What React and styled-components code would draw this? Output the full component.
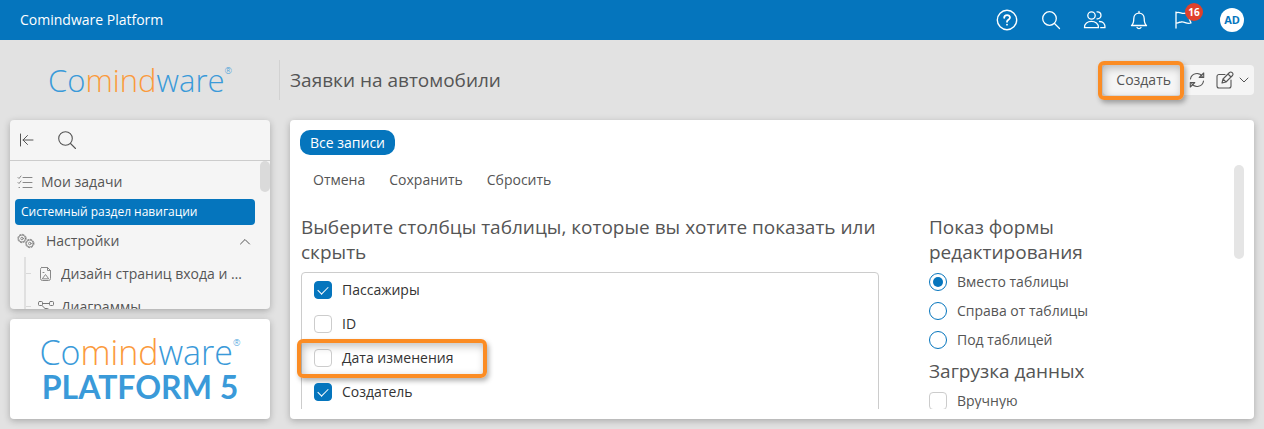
import React from "react";
import styled, { createGlobalStyle } from "styled-components";

const blue = "#0575bd";
const logoBlue = "#3a9ad9";
const logoOrange = "#fb9a3c";

const GlobalStyle = createGlobalStyle`
  * { box-sizing: border-box; }
  body {
    margin: 0;
    background: #e2e2e2;
    color: #555;
    font: 14px/20px "Open Sans", "Noto Sans", sans-serif;
  }
  button, input { font: inherit; color: inherit; margin: 0; }
  button { border: 0; padding: 0; background: none; cursor: pointer; }
  h1, h2, p, ul, fieldset { margin: 0; padding: 0; border: 0; font-weight: 400; }
  ul { list-style: none; }
  a { color: inherit; text-decoration: none; }
  svg { display: block; fill: none; stroke: currentColor; flex: none; }
`;

const Page = styled.div`
  display: flex;
  flex-direction: column;
  height: 100vh;
  min-height: 400px;
`;

const TopBar = styled.header`
  display: flex;
  align-items: center;
  justify-content: space-between;
  height: 40px;
  flex: none;
  padding: 0 20px;
  background: ${blue};
  color: #fff;
`;

const TopActions = styled.nav`
  display: flex;
  align-items: center;
  gap: 20px;
`;

const TopButton = styled.button`
  position: relative;
  display: grid;
  place-items: center;
  width: 24px;
  height: 24px;
`;

const Badge = styled.span`
  position: absolute;
  top: -5px;
  right: -8px;
  min-width: 18px;
  height: 18px;
  border-radius: 9px;
  background: #e0412b;
  font-size: 10px;
  line-height: 18px;
  font-weight: 700;
  text-align: center;
`;

const Avatar = styled.button`
  width: 24px;
  height: 24px;
  margin-left: 5px;
  border-radius: 50%;
  background: #fff;
  color: ${blue};
  font-size: 11px;
  line-height: 24px;
  font-weight: 700;
`;

const Heading = styled.div`
  display: flex;
  align-items: center;
  height: 80px;
  flex: none;
  padding: 0 10px;
`;

const Brand = styled.a`
  display: flex;
  justify-content: center;
  width: 260px;
  flex: none;
`;

const Wordmark = styled.span`
  display: flex;
  align-items: flex-start;
  color: ${logoBlue};
  font-size: ${(p) => p.$size}px;
  line-height: 36px;
  font-weight: 350;
`;

const WordAccent = styled.span`
  color: ${logoOrange};
`;

const Mark = styled.span`
  font-size: 9px;
  line-height: 18px;
`;

const Title = styled.h1`
  display: flex;
  align-items: center;
  flex: 1;
  height: 40px;
  margin-left: 9px;
  padding-left: 10px;
  border-left: 1px solid #d2d2d2;
  font-size: 19px;
  line-height: 25px;
`;

const Tools = styled.div`
  display: flex;
  align-items: center;
  height: 30px;
  border-radius: 4px;
  background: #f5f5f5;
`;

const CreateButton = styled.button`
  position: relative;
  height: 30px;
  padding: 0 13px;
`;

const ToolButton = styled.button`
  display: flex;
  align-items: center;
  gap: 4px;
  height: 30px;
  padding: 0 5px;
`;

const Highlight = styled.span`
  position: absolute;
  inset: ${(p) => p.$inset};
  border: 4px solid #fb8c24;
  border-radius: 6px;
  box-shadow: 2px 3px 5px rgba(0, 0, 0, 0.3), inset 2px 3px 8px rgba(0, 0, 0, 0.25);
  pointer-events: none;
`;

const Body = styled.div`
  display: grid;
  grid-template-columns: 260px minmax(0, 1fr);
  gap: 20px;
  flex: 1;
  min-height: 0;
  padding: 0 10px 10px;
`;

const Side = styled.aside`
  display: flex;
  flex-direction: column;
  gap: 10px;
  min-height: 0;
`;

const Card = styled.section`
  display: flex;
  flex-direction: column;
  min-height: 0;
  border-radius: 4px;
  background: #fff;
  box-shadow: 0 2px 7px rgba(0, 0, 0, 0.25);
  overflow: hidden;
`;

const NavCard = styled(Card)`
  flex: 1;
  background: #f5f5f5;
`;

const NavTools = styled.div`
  display: flex;
  align-items: center;
  gap: 21px;
  height: 41px;
  flex: none;
  padding: 0 8px;
  border-bottom: 1px solid #ccc;
`;

const NavScroll = styled.div`
  display: flex;
  align-items: flex-start;
  flex: 1;
  min-height: 0;
  overflow: hidden;
`;

const ScrollThumb = styled.div`
  width: 10px;
  height: ${(p) => p.$length}px;
  flex: none;
  border-radius: 5px;
  background: ${(p) => p.$tone};
`;

const NavList = styled.ul`
  flex: 1;
  min-width: 0;
  padding: 4px 5px 0;
`;

const NavLink = styled.a`
  display: flex;
  align-items: center;
  gap: ${(p) => p.$gap}px;
  height: ${(p) => p.$height}px;
  padding: 0 4px 0 2px;
`;

const NavText = styled.span`
  flex: 1;
  min-width: 0;
  overflow: hidden;
  white-space: nowrap;
  text-overflow: ellipsis;
`;

const NavSection = styled.p`
  padding: 0 6px;
  border-radius: 4px;
  background: ${blue};
  color: #fff;
  font-size: 12px;
  line-height: 26px;
`;

const SubList = styled.ul`
  margin-left: 9px;
  border-left: 2px solid #e0e0e0;
`;

const SubItem = styled.li`
  display: flex;
  align-items: center;
  &::before {
    content: "";
    width: 5px;
    height: 1px;
    background: #d8d8d8;
  }
`;

const SubLink = styled.a`
  display: flex;
  align-items: center;
  flex: 1;
  min-width: 0;
  gap: 7px;
  height: 33px;
  padding: 0 12px 0 7px;
`;

const LogoCard = styled(Card)`
  align-items: center;
  justify-content: center;
  height: 100px;
  flex: none;
`;

const Product = styled.span`
  color: ${logoBlue};
  font-family: Lato, "Open Sans", sans-serif;
  font-size: 32px;
  line-height: 34px;
  font-weight: 700;
`;

const Main = styled(Card)`
  padding: 10px 0;
  gap: 10px;
`;

const Views = styled.div`
  display: flex;
  flex: none;
  padding: 0 10px;
`;

const ViewPill = styled.button`
  height: 25px;
  padding: 0 10px;
  border-radius: 10px;
  background: ${blue};
  color: #fff;
`;

const Scroller = styled.div`
  display: flex;
  align-items: flex-start;
  flex: 1;
  min-height: 0;
  padding: 0 10px 0 11px;
  overflow: hidden;
`;

const Settings = styled.form`
  display: flex;
  flex-direction: column;
  gap: 20px;
  flex: 1;
  padding-right: 35px;
`;

const Commands = styled.div`
  display: flex;
  height: 30px;
`;

const Command = styled.button`
  padding: 0 12px;
`;

const Columns = styled.div`
  display: grid;
  grid-template-columns: minmax(0, 578fr) minmax(0, 270fr);
  align-items: start;
  gap: 50px;
`;

const SectionTitle = styled.h2`
  margin-bottom: ${(p) => p.$after}px;
  font-size: 19px;
  line-height: 25px;
`;

const FieldList = styled.ul`
  padding-bottom: 20px;
  border: 1px solid #ccc;
  border-radius: 4px;
`;

const Field = styled.li`
  position: relative;
  padding-left: 12px;
`;

const Options = styled.fieldset`
  margin-bottom: 5px;
`;

const Choice = styled.label`
  display: flex;
  align-items: center;
  gap: 10px;
  height: ${(p) => p.$height}px;
  color: ${(p) => p.$color || "inherit"};
`;

const Check = styled.input.attrs({ type: "checkbox" })`
  appearance: none;
  display: grid;
  place-items: center;
  width: 18px;
  height: 18px;
  border: 1px solid #ccc;
  border-radius: 4px;
  background: #fff;
  &:checked {
    border-color: ${blue};
    background: ${blue};
  }
  &:checked::after {
    content: "";
    width: 9px;
    height: 5px;
    margin-bottom: 3px;
    border: solid #fff;
    border-width: 0 0 1px 1px;
    transform: rotate(-45deg);
  }
`;

const Radio = styled.input.attrs({ type: "radio" })`
  appearance: none;
  width: 18px;
  height: 18px;
  border: 1px solid ${blue};
  border-radius: 50%;
  background: #fff;
  &:checked {
    padding: 3px;
    background: ${blue} content-box;
  }
`;

const Icon = ({ w = 24, h = 24, sw = 1.3, color, children }) => (
  <svg
    width={w}
    height={h}
    viewBox={`0 0 ${w} ${h}`}
    strokeWidth={sw}
    strokeLinecap="round"
    strokeLinejoin="round"
    color={color}
    aria-hidden="true"
  >
    {children}
  </svg>
);

const Search = ({ sw }) => (
  <Icon sw={sw}>
    <circle cx="10.5" cy="10.5" r="6.8" />
    <path d="M15.5 15.5l5 5" />
  </Icon>
);

const Logo = ({ size }) => (
  <Wordmark $size={size}>
    <span>
      Co<WordAccent>mind</WordAccent>ware
    </span>
    <Mark>®</Mark>
  </Wordmark>
);

const fields = [
  { name: "Пассажиры", checked: true },
  { name: "ID" },
  { name: "Дата изменения", highlighted: true },
  { name: "Создатель", checked: true },
];

const modes = ["Вместо таблицы", "Справа от таблицы", "Под таблицей"];

export default function App() {
  return (
    <Page>
      <GlobalStyle />
      <TopBar>
        <a href="#home">Comindware Platform</a>
        <TopActions>
          <TopButton aria-label="Справка">
            <Icon sw={1.4}>
              <circle cx="12" cy="12" r="9.7" />
              <path strokeWidth="1.8" d="M9.2 9.8c0-3.7 5.8-3.6 5.8-.2 0 2.3-3 2.2-3 4.2M12 16.600v.1" />
            </Icon>
          </TopButton>
          <TopButton aria-label="Поиск">
            <Search />
          </TopButton>
          <TopButton aria-label="Пользователи">
            <Icon>
              <circle cx="8.5" cy="7.500" r="3.700" />
              <path d="M1.500 19.700c-.7-8.500 14.500-8.500 14 0zM14 3.800c5.300-.5 5.300 7.600 0 7M17.700 19.700H22c.3-4-2-6.200-5.500-6.200" />
            </Icon>
          </TopButton>
          <TopButton aria-label="Уведомления">
            <Icon>
              <path d="M4.500 17.500c2-1.600 2.300-3.500 2.300-7 0-7.300 10.400-7.300 10.400 0 0 3.500.3 5.400 2.300 7zM10 19.500c.8 1.500 3.200 1.500 4 0M12 5V3.500" />
            </Icon>
          </TopButton>
          <TopButton aria-label="Задачи">
            <Icon>
              <path d="M5 20V4M5 4.800c3-1.500 5 .8 8 .6l6-.8-1.500 4.500L20 15c-5 1.500-6-1.800-10-1-2 .2-3.500 1-5 1.300" />
            </Icon>
            <Badge>16</Badge>
          </TopButton>
          <Avatar>AD</Avatar>
        </TopActions>
      </TopBar>

      <Heading>
        <Brand href="#home">
          <Logo size={31} />
        </Brand>
        <Title>Заявки на автомобили</Title>
        <Tools>
          <CreateButton>
            Создать
            <Highlight $inset="-4px 0 -5px -5px" />
          </CreateButton>
          <ToolButton aria-label="Обновить">
            <Icon w={16} h={16} sw={1.1}>
              <path d="M1.500 7C2.300 1.200 10-.5 13.300 4.500M14.500 9C13.700 14.800 6 16.500 2.700 11.500M14.700 1v4.500h-4.500zM1.300 15v-4.500h4.500z" />
            </Icon>
          </ToolButton>
          <ToolButton aria-label="Изменить">
            <Icon w={20} h={18} sw={1.1}>
              <path d="M10 3.500H4a2 2 0 0 0-2 2v9.500a2 2 0 0 0 2 2h10a2 2 0 0 0 2-2V9M7 12l1-4 6.500-6.500c1.700-1.500 4.500 1 3 3L11 11zM13 3l3 3M8 8l3 3" />
            </Icon>
            <Icon w={10} h={8} sw={1}>
              <path d="M1 2l4 4 4-4" />
            </Icon>
          </ToolButton>
        </Tools>
      </Heading>

      <Body>
        <Side>
          <NavCard as="nav">
            <NavTools>
              <button aria-label="Свернуть">
                <Icon w={16} h={14} sw={1}>
                  <path d="M2.500 1v12M15 7H5M9.500 2.500L5 7l4.500 4.500" />
                </Icon>
              </button>
              <button aria-label="Поиск">
                <Search sw={1.1} />
              </button>
            </NavTools>
            <NavScroll>
              <NavList>
                <li>
                  <NavLink href="#tasks" $gap={8} $height={34}>
                    <Icon w={16} h={14} sw={1} color="#888">
                      <path d="M6 2.500h9M6 7.500h9M6 12.500h9M1 2.500l1 1 2-2.500M1 7.500l1 1 2-2.500M2 12.500h.5" />
                    </Icon>
                    <NavText>Мои задачи</NavText>
                  </NavLink>
                </li>
                <li>
                  <NavSection>Системный раздел навигации</NavSection>
                </li>
                <li>
                  <NavLink href="#settings" $gap={11} $height={32}>
                    <Icon w={18} h={16} sw={0.8} color="#777">
                      <circle cx="5" cy="5.500" r="1.300" />
                      <circle cx="5" cy="5.500" r="3.500" />
                      <circle cx="5" cy="5.500" r="4.200" strokeDasharray="1.600 1.700" />
                      <circle cx="12.800" cy="10.500" r="1.300" />
                      <circle cx="12.800" cy="10.500" r="3.500" />
                      <circle cx="12.800" cy="10.500" r="4.200" strokeDasharray="1.600 1.700" />
                    </Icon>
                    <NavText>Настройки</NavText>
                    <Icon w={12} h={8} sw={1}>
                      <path d="M1.500 7L6 2.500 10.500 7" />
                    </Icon>
                  </NavLink>
                  <SubList>
                    <SubItem>
                      <SubLink href="#design">
                        <Icon w={16} h={16} sw={1} color="#888">
                          <path d="M3.500 1.500h6l3 3v8a2 2 0 0 1-2 2h-6a2 2 0 0 1-2-2v-9a2 2 0 0 1 1-2zM9.500 1.500v3h3M4.500 12.500l3-4 3 4zM5 6.500h1" />
                        </Icon>
                        <NavText>Дизайн страниц входа и регистрации</NavText>
                      </SubLink>
                    </SubItem>
                    <SubItem>
                      <SubLink href="#diagrams">
                        <Icon w={16} h={16} sw={1} color="#777">
                          <rect x="0.500" y="2.500" width="4" height="4" rx="1" />
                          <rect x="11.500" y="2.500" width="4" height="4" rx="1" />
                          <rect x="6.500" y="9.500" width="4" height="4" rx="1" />
                          <path d="M4.500 4.500h7M4 6.500l3 3" />
                        </Icon>
                        <NavText>Диаграммы</NavText>
                      </SubLink>
                    </SubItem>
                  </SubList>
                </li>
              </NavList>
              <ScrollThumb $length={31} $tone="#dadada" />
            </NavScroll>
          </NavCard>
          <LogoCard>
            <Logo size={34} />
            <Product>PLATFORM 5</Product>
          </LogoCard>
        </Side>

        <Main as="main">
          <Views>
            <ViewPill>Все записи</ViewPill>
          </Views>
          <Scroller>
            <Settings>
              <Commands>
                <Command type="button">Отмена</Command>
                <Command type="button">Сохранить</Command>
                <Command type="button">Сбросить</Command>
              </Commands>
              <Columns>
                <section>
                  <SectionTitle $after={7}>
                    Выберите столбцы таблицы, которые вы хотите показать или скрыть
                  </SectionTitle>
                  <FieldList>
                    {fields.map((f) => (
                      <Field key={f.name}>
                        <Choice $height={34} $color="#333">
                          <Check defaultChecked={f.checked} />
                          {f.name}
                        </Choice>
                        {f.highlighted && <Highlight $inset="-2px 391px -3px -5px" />}
                      </Field>
                    ))}
                  </FieldList>
                </section>
                <section>
                  <SectionTitle $after={2}>Показ формы редактирования</SectionTitle>
                  <Options>
                    {modes.map((m, i) => (
                      <Choice key={m} $height={29}>
                        <Radio name="mode" defaultChecked={i === 0} />
                        {m}
                      </Choice>
                    ))}
                  </Options>
                  <SectionTitle $after={2}>Загрузка данных</SectionTitle>
                  <Choice $height={29}>
                    <Check />
                    Вручную
                  </Choice>
                </section>
              </Columns>
            </Settings>
            <ScrollThumb $length={94} $tone="#e5e5e5" />
          </Scroller>
        </Main>
      </Body>
    </Page>
  );
}
